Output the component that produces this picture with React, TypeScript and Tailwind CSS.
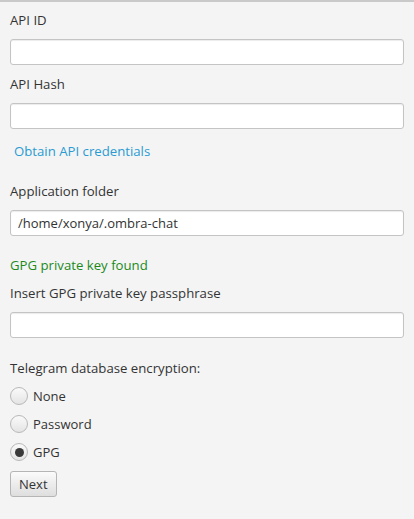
import React from "react";

const font = { fontFamily: '"Open Sans", "Noto Sans", sans-serif' };

function Field({ value }: { value?: string }) {
  return (
    <div className="h-[26px] w-[394px] rounded-[3px] border border-[#c4c4c4] bg-white px-[7px] shadow-[inset_0_1px_1px_rgba(0,0,0,0.08)] flex items-center text-[13px] text-[#333]">
      {value}
    </div>
  );
}

function Radio({ label, checked }: { label: string; checked?: boolean }) {
  return (
    <div className="flex items-center h-[18px] gap-[5px]">
      <span className="size-[18px] rounded-full border border-[#b8b8b8] bg-gradient-to-b from-[#fafafa] to-[#e4e4e4] flex items-center justify-center">
        {checked && <span className="size-[9px] rounded-full bg-[#3a3a3a]" />}
      </span>
      <span className="text-[13px] text-[#333]">{label}</span>
    </div>
  );
}

export default function App() {
  return (
    <div style={font} className="w-[414px] h-[519px] bg-[#f4f4f4] border-t-2 border-[#c9c9c9] pl-[10px] text-[13.2px] text-[#333] leading-[18px]">
      <div className="pt-[9px]">API ID</div>
      <div className="mt-[10px]">
        <Field />
      </div>
      <div className="mt-[10px]">API Hash</div>
      <div className="mt-[10px]">
        <Field />
      </div>
      <div className="mt-[13px] pl-[4px] text-[#2a9bd3]">Obtain API credentials</div>
      <div className="mt-[22px]">Application folder</div>
      <div className="mt-[10px]">
        <Field value="/home/xonya/.ombra-chat" />
      </div>
      <div className="mt-[20px] text-[#1b8a1b]">GPG private key found</div>
      <div className="mt-[10px]">Insert GPG private key passphrase</div>
      <div className="mt-[10px]">
        <Field />
      </div>
      <div className="mt-[21px]">Telegram database encryption:</div>
      <div className="mt-[10px] flex flex-col gap-[10px]">
        <Radio label="None" />
        <Radio label="Password" />
        <Radio label="GPG" checked />
      </div>
      <button className="mt-[10px] h-[26px] px-[8px] rounded-[3px] border border-[#b5b5b5] bg-gradient-to-b from-[#fbfbfb] to-[#dedede] text-[13px] text-[#333] leading-none">
        Next
      </button>
    </div>
  );
}
